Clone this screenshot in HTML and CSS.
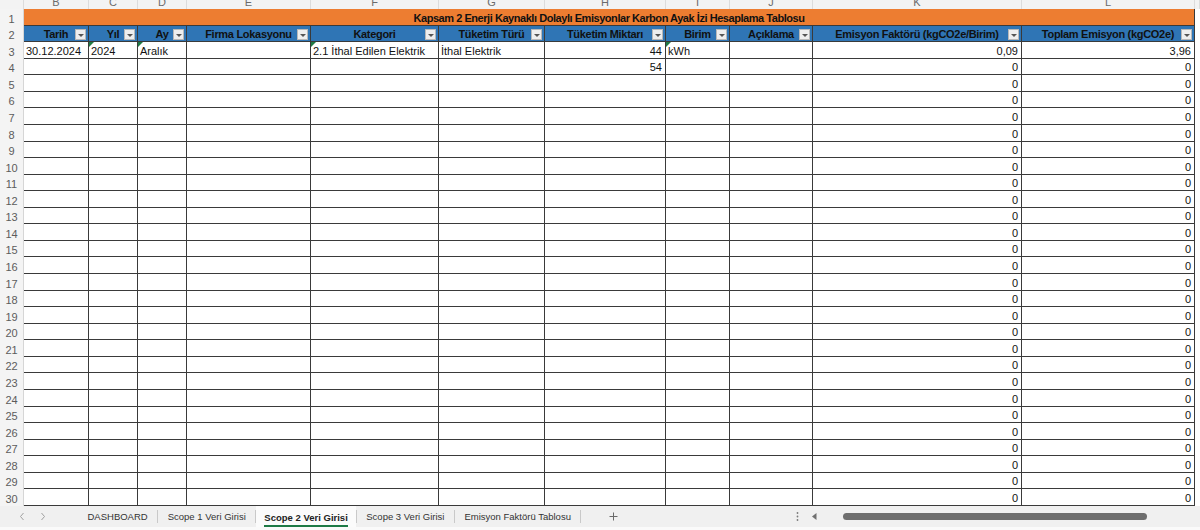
FILE: index.html
```html
<!DOCTYPE html>
<html lang="tr">
<head>
    <meta charset="UTF-8">
    <title>Scope 2 Veri Girisi</title>
    <link rel="stylesheet" href="styles.css">
</head>
<body>
    <div class="sheet">
        <table class="grid">
            <colgroup>
                <col class="w-rh"><col class="w-b"><col class="w-c"><col class="w-d"><col class="w-e"><col class="w-f">
                <col class="w-g"><col class="w-h"><col class="w-i"><col class="w-j"><col class="w-k"><col class="w-l"><col class="w-rest">
            </colgroup>
            <thead>
                <tr class="letters">
                    <th></th>
                    <th><div><span>B</span></div></th>
                    <th><div><span>C</span></div></th>
                    <th><div><span>D</span></div></th>
                    <th><div><span>E</span></div></th>
                    <th><div><span>F</span></div></th>
                    <th><div><span>G</span></div></th>
                    <th><div><span>H</span></div></th>
                    <th><div><span>I</span></div></th>
                    <th><div><span>J</span></div></th>
                    <th><div><span>K</span></div></th>
                    <th><div><span>L</span></div></th>
                    <th></th>
                </tr>
            </thead>
            <tbody>
                <tr class="title">
                    <th>1</th>
                    <td colspan="11">Kapsam 2 Enerji Kaynaklı Dolaylı Emisyonlar Karbon Ayak İzi Hesaplama Tablosu</td>
                    <td class="rest"></td>
                </tr>
                <tr class="head">
                    <th>2</th>
                    <td>Tarih<span class="filter"></span></td>
                    <td>Yıl<span class="filter"></span></td>
                    <td>Ay<span class="filter"></span></td>
                    <td>Firma Lokasyonu<span class="filter"></span></td>
                    <td>Kategori<span class="filter"></span></td>
                    <td>Tüketim Türü<span class="filter"></span></td>
                    <td>Tüketim Miktarı<span class="filter"></span></td>
                    <td>Birim<span class="filter"></span></td>
                    <td>Açıklama<span class="filter"></span></td>
                    <td>Emisyon Faktörü (kgCO2e/Birim)<span class="filter"></span></td>
                    <td>Toplam Emisyon (kgCO2e)<span class="filter"></span></td>
                    <td class="rest"></td>
                </tr>
                <tr>
                    <th>3</th>
                    <td>30.12.2024</td>
                    <td class="mark">2024</td>
                    <td class="mark">Aralık</td>
                    <td></td>
                    <td class="mark">2.1 İthal Edilen Elektrik</td>
                    <td>İthal Elektrik</td>
                    <td class="num">44</td>
                    <td class="mark">kWh</td>
                    <td></td>
                    <td class="num">0,09</td>
                    <td class="num">3,96</td>
                    <td class="rest"></td>
                </tr>
                <tr>
                    <th>4</th>
                    <td></td><td></td><td></td><td></td><td></td><td></td>
                    <td class="num">54</td>
                    <td></td><td></td>
                    <td class="num">0</td><td class="num">0</td><td class="rest"></td>
                </tr>
                <tr><th>5</th><td></td><td></td><td></td><td></td><td></td><td></td><td></td><td></td><td></td><td class="num">0</td><td class="num">0</td><td class="rest"></td></tr>
                <tr><th>6</th><td></td><td></td><td></td><td></td><td></td><td></td><td></td><td></td><td></td><td class="num">0</td><td class="num">0</td><td class="rest"></td></tr>
                <tr><th>7</th><td></td><td></td><td></td><td></td><td></td><td></td><td></td><td></td><td></td><td class="num">0</td><td class="num">0</td><td class="rest"></td></tr>
                <tr><th>8</th><td></td><td></td><td></td><td></td><td></td><td></td><td></td><td></td><td></td><td class="num">0</td><td class="num">0</td><td class="rest"></td></tr>
                <tr><th>9</th><td></td><td></td><td></td><td></td><td></td><td></td><td></td><td></td><td></td><td class="num">0</td><td class="num">0</td><td class="rest"></td></tr>
                <tr><th>10</th><td></td><td></td><td></td><td></td><td></td><td></td><td></td><td></td><td></td><td class="num">0</td><td class="num">0</td><td class="rest"></td></tr>
                <tr><th>11</th><td></td><td></td><td></td><td></td><td></td><td></td><td></td><td></td><td></td><td class="num">0</td><td class="num">0</td><td class="rest"></td></tr>
                <tr><th>12</th><td></td><td></td><td></td><td></td><td></td><td></td><td></td><td></td><td></td><td class="num">0</td><td class="num">0</td><td class="rest"></td></tr>
                <tr><th>13</th><td></td><td></td><td></td><td></td><td></td><td></td><td></td><td></td><td></td><td class="num">0</td><td class="num">0</td><td class="rest"></td></tr>
                <tr><th>14</th><td></td><td></td><td></td><td></td><td></td><td></td><td></td><td></td><td></td><td class="num">0</td><td class="num">0</td><td class="rest"></td></tr>
                <tr><th>15</th><td></td><td></td><td></td><td></td><td></td><td></td><td></td><td></td><td></td><td class="num">0</td><td class="num">0</td><td class="rest"></td></tr>
                <tr><th>16</th><td></td><td></td><td></td><td></td><td></td><td></td><td></td><td></td><td></td><td class="num">0</td><td class="num">0</td><td class="rest"></td></tr>
                <tr><th>17</th><td></td><td></td><td></td><td></td><td></td><td></td><td></td><td></td><td></td><td class="num">0</td><td class="num">0</td><td class="rest"></td></tr>
                <tr><th>18</th><td></td><td></td><td></td><td></td><td></td><td></td><td></td><td></td><td></td><td class="num">0</td><td class="num">0</td><td class="rest"></td></tr>
                <tr><th>19</th><td></td><td></td><td></td><td></td><td></td><td></td><td></td><td></td><td></td><td class="num">0</td><td class="num">0</td><td class="rest"></td></tr>
                <tr><th>20</th><td></td><td></td><td></td><td></td><td></td><td></td><td></td><td></td><td></td><td class="num">0</td><td class="num">0</td><td class="rest"></td></tr>
                <tr><th>21</th><td></td><td></td><td></td><td></td><td></td><td></td><td></td><td></td><td></td><td class="num">0</td><td class="num">0</td><td class="rest"></td></tr>
                <tr><th>22</th><td></td><td></td><td></td><td></td><td></td><td></td><td></td><td></td><td></td><td class="num">0</td><td class="num">0</td><td class="rest"></td></tr>
                <tr><th>23</th><td></td><td></td><td></td><td></td><td></td><td></td><td></td><td></td><td></td><td class="num">0</td><td class="num">0</td><td class="rest"></td></tr>
                <tr><th>24</th><td></td><td></td><td></td><td></td><td></td><td></td><td></td><td></td><td></td><td class="num">0</td><td class="num">0</td><td class="rest"></td></tr>
                <tr><th>25</th><td></td><td></td><td></td><td></td><td></td><td></td><td></td><td></td><td></td><td class="num">0</td><td class="num">0</td><td class="rest"></td></tr>
                <tr><th>26</th><td></td><td></td><td></td><td></td><td></td><td></td><td></td><td></td><td></td><td class="num">0</td><td class="num">0</td><td class="rest"></td></tr>
                <tr><th>27</th><td></td><td></td><td></td><td></td><td></td><td></td><td></td><td></td><td></td><td class="num">0</td><td class="num">0</td><td class="rest"></td></tr>
                <tr><th>28</th><td></td><td></td><td></td><td></td><td></td><td></td><td></td><td></td><td></td><td class="num">0</td><td class="num">0</td><td class="rest"></td></tr>
                <tr><th>29</th><td></td><td></td><td></td><td></td><td></td><td></td><td></td><td></td><td></td><td class="num">0</td><td class="num">0</td><td class="rest"></td></tr>
                <tr><th>30</th><td></td><td></td><td></td><td></td><td></td><td></td><td></td><td></td><td></td><td class="num">0</td><td class="num">0</td><td class="rest"></td></tr>
            </tbody>
        </table>
    </div>

    <div class="tabbar">
        <div class="tabs">
            <div class="nav">
                <svg width="6" height="9" viewBox="0 0 6 9"><path d="M4.5 1 L1.5 4.5 L4.5 8" fill="none" stroke="#a0a0a0" stroke-width="1"/></svg>
                <svg width="6" height="9" viewBox="0 0 6 9"><path d="M1.5 1 L4.5 4.5 L1.5 8" fill="none" stroke="#a0a0a0" stroke-width="1"/></svg>
            </div>
            <div class="tab">DASHBOARD</div>
            <span class="sep"></span>
            <div class="tab">Scope 1 Veri Girisi</div>
            <span class="sep"></span>
            <div class="tab active"><span>Scope 2 Veri Girisi</span></div>
            <span class="sep"></span>
            <div class="tab">Scope 3 Veri Girisi</div>
            <span class="sep"></span>
            <div class="tab">Emisyon Faktörü Tablosu</div>
            <span class="sep"></span>
            <div class="add">
                <svg width="9" height="9" viewBox="0 0 9 9"><path d="M4.5 0.5 V8.5 M0.5 4.5 H8.5" stroke="#6a6a6a" stroke-width="1"/></svg>
            </div>
        </div>
        <div class="dots">
            <svg width="3" height="9" viewBox="0 0 3 9"><circle cx="1.5" cy="1" r="0.9" fill="#7a7a7a"/><circle cx="1.5" cy="4.5" r="0.9" fill="#7a7a7a"/><circle cx="1.5" cy="8" r="0.9" fill="#7a7a7a"/></svg>
        </div>
        <div class="hscroll">
            <svg width="5" height="7" viewBox="0 0 5 7"><path d="M4.5 0 V7 L0 3.5 Z" fill="#707070"/></svg>
            <span class="thumb"></span>
        </div>
    </div>
</body>
</html>
```

FILE: styles.css
```css
* {
    box-sizing: border-box;
}
body {
    margin: 0;
    width: 1200px;
    height: 530px;
    overflow: hidden;
    background: #fafafa;
    font-family: 'Liberation Sans', Arial, sans-serif;
}
.sheet {
    height: 506px;
    overflow: hidden;
    background: #fff;
}
.grid {
    width: 1200px;
    table-layout: fixed;
    border-collapse: separate;
    border-spacing: 0;
}
.grid th,
.grid td {
    padding: 0;
}
.w-rh { width: 24px; }
.w-b { width: 65px; }
.w-c { width: 49px; }
.w-d { width: 49px; }
.w-e { width: 124px; }
.w-f { width: 128px; }
.w-g { width: 106px; }
.w-h { width: 121px; }
.w-i { width: 64px; }
.w-j { width: 83px; }
.w-k { width: 209px; }
.w-l { width: 173px; }
.w-rest { width: 5px; }

/* column letters, cut off by the scroll position */
.letters th {
    height: 9px;
    background: #f3f3f3;
    border-right: 1px solid #dcdcdc;
    color: #6b6b6b;
    font-size: 11px;
    font-weight: normal;
}
.letters th div {
    height: 9px;
    overflow: hidden;
    display: flex;
    align-items: flex-end;
    justify-content: center;
}
.letters th span {
    line-height: 14px;
}

.grid tbody tr {
    height: 16.57px;
}
.grid tbody th {
    background: #f4f4f4;
    border-right: 1px solid #d6d6d6;
    color: #5c5c5c;
    font-size: 11px;
    font-weight: normal;
    line-height: 13px;
    vertical-align: bottom;
    text-align: center;
}
.grid tbody td {
    position: relative;
    border-right: 1px solid #3a3a3a;
    border-bottom: 1px solid #3a3a3a;
    padding: 0 2px;
    font-size: 11px;
    line-height: 13px;
    color: #111;
    white-space: nowrap;
    overflow: hidden;
    vertical-align: bottom;
}
.grid tbody td.num {
    text-align: right;
    padding-right: 3px;
}
.grid tbody td.rest {
    border: none;
    background: #fff;
}
.mark::before {
    content: "";
    position: absolute;
    left: 0;
    top: 0;
    border-top: 5px solid #1f7a45;
    border-right: 5px solid transparent;
}

.title td {
    background: #ed7d31;
    border-right: none;
    border-bottom: 1px solid #fff;
    color: #fff;
    font-size: 9.6px;
    letter-spacing: -0.45px;
    font-weight: bold;
    text-align: center;
    vertical-align: middle;
}
.head td {
    background: #2f75b5;
    color: #fff;
    font-size: 9.6px;
    letter-spacing: -0.3px;
    font-weight: bold;
    text-align: center;
    vertical-align: middle;
}
.filter {
    position: absolute;
    right: 2px;
    top: 3px;
    width: 11px;
    height: 11px;
    background: #eeeeee;
    border: 1px solid #b8b8b8;
}
.filter::after {
    content: "";
    position: absolute;
    left: 2px;
    top: 4px;
    border-left: 3px solid transparent;
    border-right: 3px solid transparent;
    border-top: 3px solid #555;
}

/* sheet tabs */
.tabbar {
    height: 21px;
    display: flex;
    align-items: center;
    background: #f0f0f0;
    font-size: 9.5px;
    color: #333;
}
.tabs {
    width: 790px;
    height: 100%;
    display: flex;
    align-items: stretch;
}
.nav {
    width: 78px;
    display: flex;
    align-items: center;
    gap: 15px;
    padding-left: 19px;
}
.tab {
    display: flex;
    align-items: center;
    padding: 0 9.5px;
    white-space: nowrap;
}
.tab.active {
    background: #fbfbfb;
    font-weight: bold;
    color: #222;
    padding: 0 8px;
}
.tab.active span {
    padding: 3px 0 2px;
    border-bottom: 2px solid #1e7a46;
    margin-top: 2px;
}
.sep {
    width: 1px;
    height: 13px;
    align-self: center;
    background: #c9c9c9;
}
.add {
    display: flex;
    align-items: center;
    padding-left: 28px;
}
.dots {
    width: 14px;
    display: flex;
    justify-content: center;
}
.hscroll {
    flex: 1;
    display: flex;
    align-items: center;
    padding-left: 8px;
}
.thumb {
    width: 304px;
    height: 7px;
    margin-left: 26px;
    border-radius: 4px;
    background: #6e6e6e;
}
```
